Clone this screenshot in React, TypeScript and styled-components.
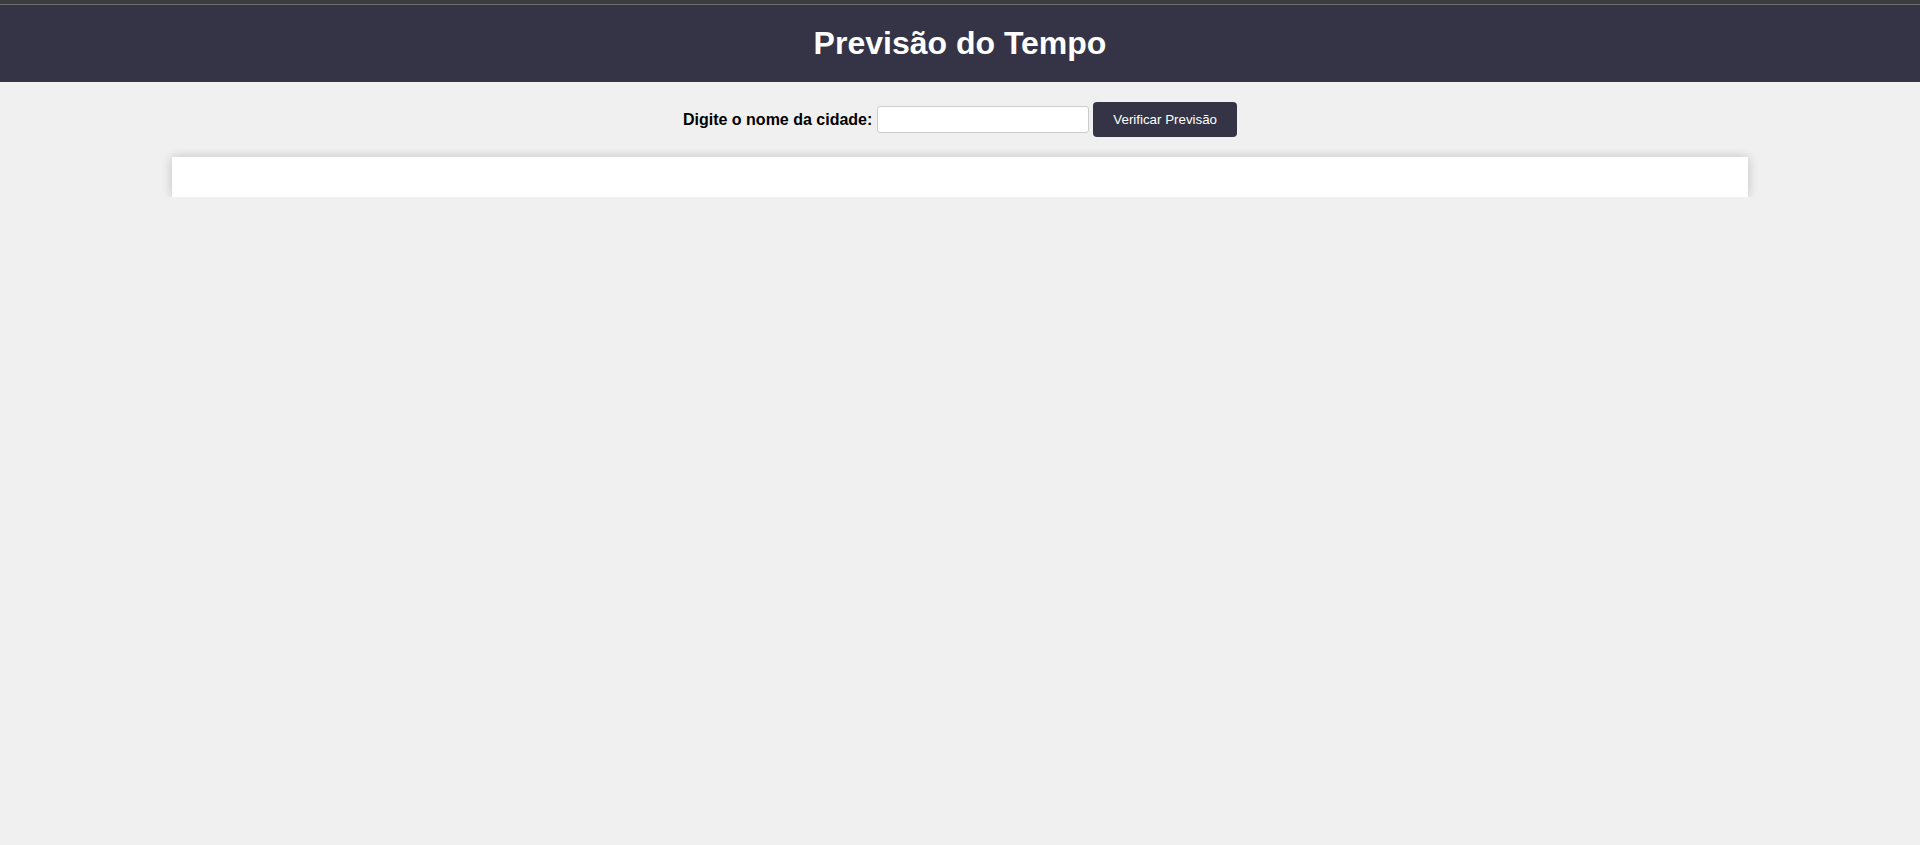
import styled, { createGlobalStyle } from "styled-components";

const GlobalStyle = createGlobalStyle`
    body {
        margin: 0;
        background-color: #f0f0f0;
        font-family: "Liberation Sans", Arial, sans-serif;
    }
`;

const TopStrip = styled.div`
    height: 4px;
    background-color: #3a3b3d;
    border-bottom: 1px solid #6e6e6e;
`;

const Header = styled.header`
    background-color: #353446;
    color: #fff;
    text-align: center;
    padding: 20px;
`;

const Title = styled.h1`
    margin: 0;
    font-size: 32px;
    line-height: 37px;
    font-weight: bold;
`;

const Form = styled.form`
    display: flex;
    justify-content: center;
    align-items: center;
    gap: 4px;
    margin-top: 20px;
`;

const Label = styled.label`
    font-size: 16px;
    font-weight: bold;
    color: #000;
    margin-right: 1px;
`;

const Input = styled.input`
    box-sizing: border-box;
    width: 212px;
    height: 27px;
    padding: 2px 6px;
    border: 1px solid #cccccc;
    border-radius: 3px;
    background-color: #fff;
    outline: none;
`;

const Button = styled.button`
    box-sizing: border-box;
    height: 35px;
    padding: 0 20px;
    border: none;
    border-radius: 4px;
    background-color: #353446;
    color: #fff;
    font-family: "Liberation Sans", Arial, sans-serif;
    font-size: 13.33px;
    cursor: pointer;
`;

const Result = styled.div`
    width: 80%;
    margin: 20px auto 0;
    padding: 20px;
    background-color: #fff;
    box-shadow: 0 0 10px rgba(0, 0, 0, 0.2);
`;

function App() {
    return (
        <>
            <GlobalStyle />
            <TopStrip />
            <Header>
                <Title>Previsão do Tempo</Title>
            </Header>
            <Form onSubmit={(e) => e.preventDefault()}>
                <Label htmlFor="cidade">Digite o nome da cidade:</Label>
                <Input id="cidade" type="text" />
                <Button type="submit">Verificar Previsão</Button>
            </Form>
            <Result />
        </>
    );
}

export default App;
